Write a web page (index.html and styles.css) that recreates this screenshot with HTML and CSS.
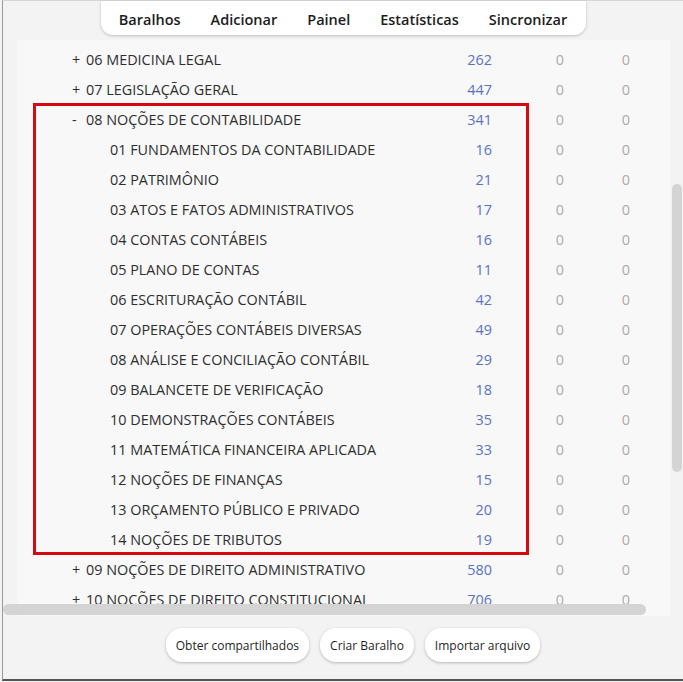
FILE: index.html
```html
<!DOCTYPE html>
<html lang="pt-BR">

<head>
    <meta charset="UTF-8">
    <meta name="viewport" content="width=device-width, initial-scale=1.0">
    <title>Baralhos</title>
    <link rel="stylesheet" href="styles.css">
</head>

<body>
    <div class="frame">
        <ul class="toolbar">
            <li>Baralhos</li>
            <li>Adicionar</li>
            <li>Painel</li>
            <li>Estatísticas</li>
            <li>Sincronizar</li>
        </ul>

        <div class="decks">
            <div class="deck"><span class="name"><i>+</i>06 MEDICINA LEGAL</span><span class="new">262</span><span class="zero">0</span><span class="zero">0</span></div>
            <div class="deck"><span class="name"><i>+</i>07 LEGISLAÇÃO GERAL</span><span class="new">447</span><span class="zero">0</span><span class="zero">0</span></div>
            <div class="deck"><span class="name"><i>-</i>08 NOÇÕES DE CONTABILIDADE</span><span class="new">341</span><span class="zero">0</span><span class="zero">0</span></div>
            <div class="deck sub"><span class="name">01 FUNDAMENTOS DA CONTABILIDADE</span><span class="new">16</span><span class="zero">0</span><span class="zero">0</span></div>
            <div class="deck sub"><span class="name">02 PATRIMÔNIO</span><span class="new">21</span><span class="zero">0</span><span class="zero">0</span></div>
            <div class="deck sub"><span class="name">03 ATOS E FATOS ADMINISTRATIVOS</span><span class="new">17</span><span class="zero">0</span><span class="zero">0</span></div>
            <div class="deck sub"><span class="name">04 CONTAS CONTÁBEIS</span><span class="new">16</span><span class="zero">0</span><span class="zero">0</span></div>
            <div class="deck sub"><span class="name">05 PLANO DE CONTAS</span><span class="new">11</span><span class="zero">0</span><span class="zero">0</span></div>
            <div class="deck sub"><span class="name">06 ESCRITURAÇÃO CONTÁBIL</span><span class="new">42</span><span class="zero">0</span><span class="zero">0</span></div>
            <div class="deck sub"><span class="name">07 OPERAÇÕES CONTÁBEIS DIVERSAS</span><span class="new">49</span><span class="zero">0</span><span class="zero">0</span></div>
            <div class="deck sub"><span class="name">08 ANÁLISE E CONCILIAÇÃO CONTÁBIL</span><span class="new">29</span><span class="zero">0</span><span class="zero">0</span></div>
            <div class="deck sub"><span class="name">09 BALANCETE DE VERIFICAÇÃO</span><span class="new">18</span><span class="zero">0</span><span class="zero">0</span></div>
            <div class="deck sub"><span class="name">10 DEMONSTRAÇÕES CONTÁBEIS</span><span class="new">35</span><span class="zero">0</span><span class="zero">0</span></div>
            <div class="deck sub"><span class="name">11 MATEMÁTICA FINANCEIRA APLICADA</span><span class="new">33</span><span class="zero">0</span><span class="zero">0</span></div>
            <div class="deck sub"><span class="name">12 NOÇÕES DE FINANÇAS</span><span class="new">15</span><span class="zero">0</span><span class="zero">0</span></div>
            <div class="deck sub"><span class="name">13 ORÇAMENTO PÚBLICO E PRIVADO</span><span class="new">20</span><span class="zero">0</span><span class="zero">0</span></div>
            <div class="deck sub"><span class="name">14 NOÇÕES DE TRIBUTOS</span><span class="new">19</span><span class="zero">0</span><span class="zero">0</span></div>
            <div class="deck"><span class="name"><i>+</i>09 NOÇÕES DE DIREITO ADMINISTRATIVO</span><span class="new">580</span><span class="zero">0</span><span class="zero">0</span></div>
            <div class="deck"><span class="name"><i>+</i>10 NOÇÕES DE DIREITO CONSTITUCIONAL</span><span class="new">706</span><span class="zero">0</span><span class="zero">0</span></div>

            <!-- highlight round the expanded deck -->
            <div class="mark"></div>
        </div>

        <div class="vscroll"></div>
        <div class="hscroll"></div>

        <div class="actions">
            <button>Obter compartilhados</button>
            <button>Criar Baralho</button>
            <button>Importar arquivo</button>
        </div>
    </div>
</body>

</html>
```

FILE: styles.css
```css
* {
    margin: 0;
    padding: 0;
    box-sizing: border-box;
}

html,
body {
    height: 682px;
    overflow: hidden;
}

body {
    background: #f3f3f3;
    font-family: "Segoe UI", "Open Sans", "Noto Sans", sans-serif;
    color: #2e2e2e;
}

.frame {
    position: relative;
    height: 681px;
    margin-left: 2px;
    border-top: 1px solid #d6d6d6;
    border-left: 1px solid #9a9a9a;
    border-bottom: 2px solid #555;
}

ul {
    list-style: none;
}

.toolbar {
    display: flex;
    justify-content: center;
    gap: 30px;
    width: 485px;
    height: 34px;
    margin: 0 auto;
    padding-top: 2px;
    background: #fff;
    border-radius: 0 0 12px 12px;
    box-shadow: 0 1px 3px rgba(0, 0, 0, 0.22);
    font-size: 14.5px;
    font-weight: 600;
    line-height: 34px;
    color: #1c1c1c;
}

.decks {
    position: relative;
    height: 576px;
    margin: 5px 0 0 14px;
    width: 653px;
    padding-top: 5px;
    background: #f8f8f8;
    overflow: hidden;
    font-size: 14.4px;
}

.deck {
    display: grid;
    grid-template-columns: 415px 60px 72px 66px;
    height: 30px;
    line-height: 30px;
    white-space: nowrap;
}

.deck .name {
    padding-left: 55px;
}

.deck .name i {
    display: inline-block;
    width: 14px;
    font-style: normal;
}

.deck.sub .name {
    padding-left: 93px;
}

.deck .new,
.deck .zero {
    text-align: right;
}

.new {
    color: #5873c2;
}

.zero {
    color: #ababab;
}

.mark {
    position: absolute;
    left: 16px;
    top: 63px;
    width: 496px;
    height: 452px;
    border: 3px solid #d50a10;
}

.vscroll {
    position: absolute;
    right: 1px;
    top: 183px;
    width: 10px;
    height: 288px;
    background: #d4d4d4;
    border-radius: 5px;
}

.hscroll {
    position: absolute;
    left: 0;
    top: 603px;
    width: 643px;
    height: 11px;
    background: #d4d4d4;
    border-radius: 6px;
}

.actions {
    display: flex;
    justify-content: center;
    gap: 11px;
    margin-top: 12px;
    padding-left: 20px;
}

.actions button {
    height: 34px;
    padding: 0 10px;
    background: #fff;
    border: 0;
    border-radius: 16px;
    box-shadow: 0 1px 3px rgba(0, 0, 0, 0.25);
    font-family: inherit;
    font-size: 12px;
    color: #1e1e1e;
}
```
